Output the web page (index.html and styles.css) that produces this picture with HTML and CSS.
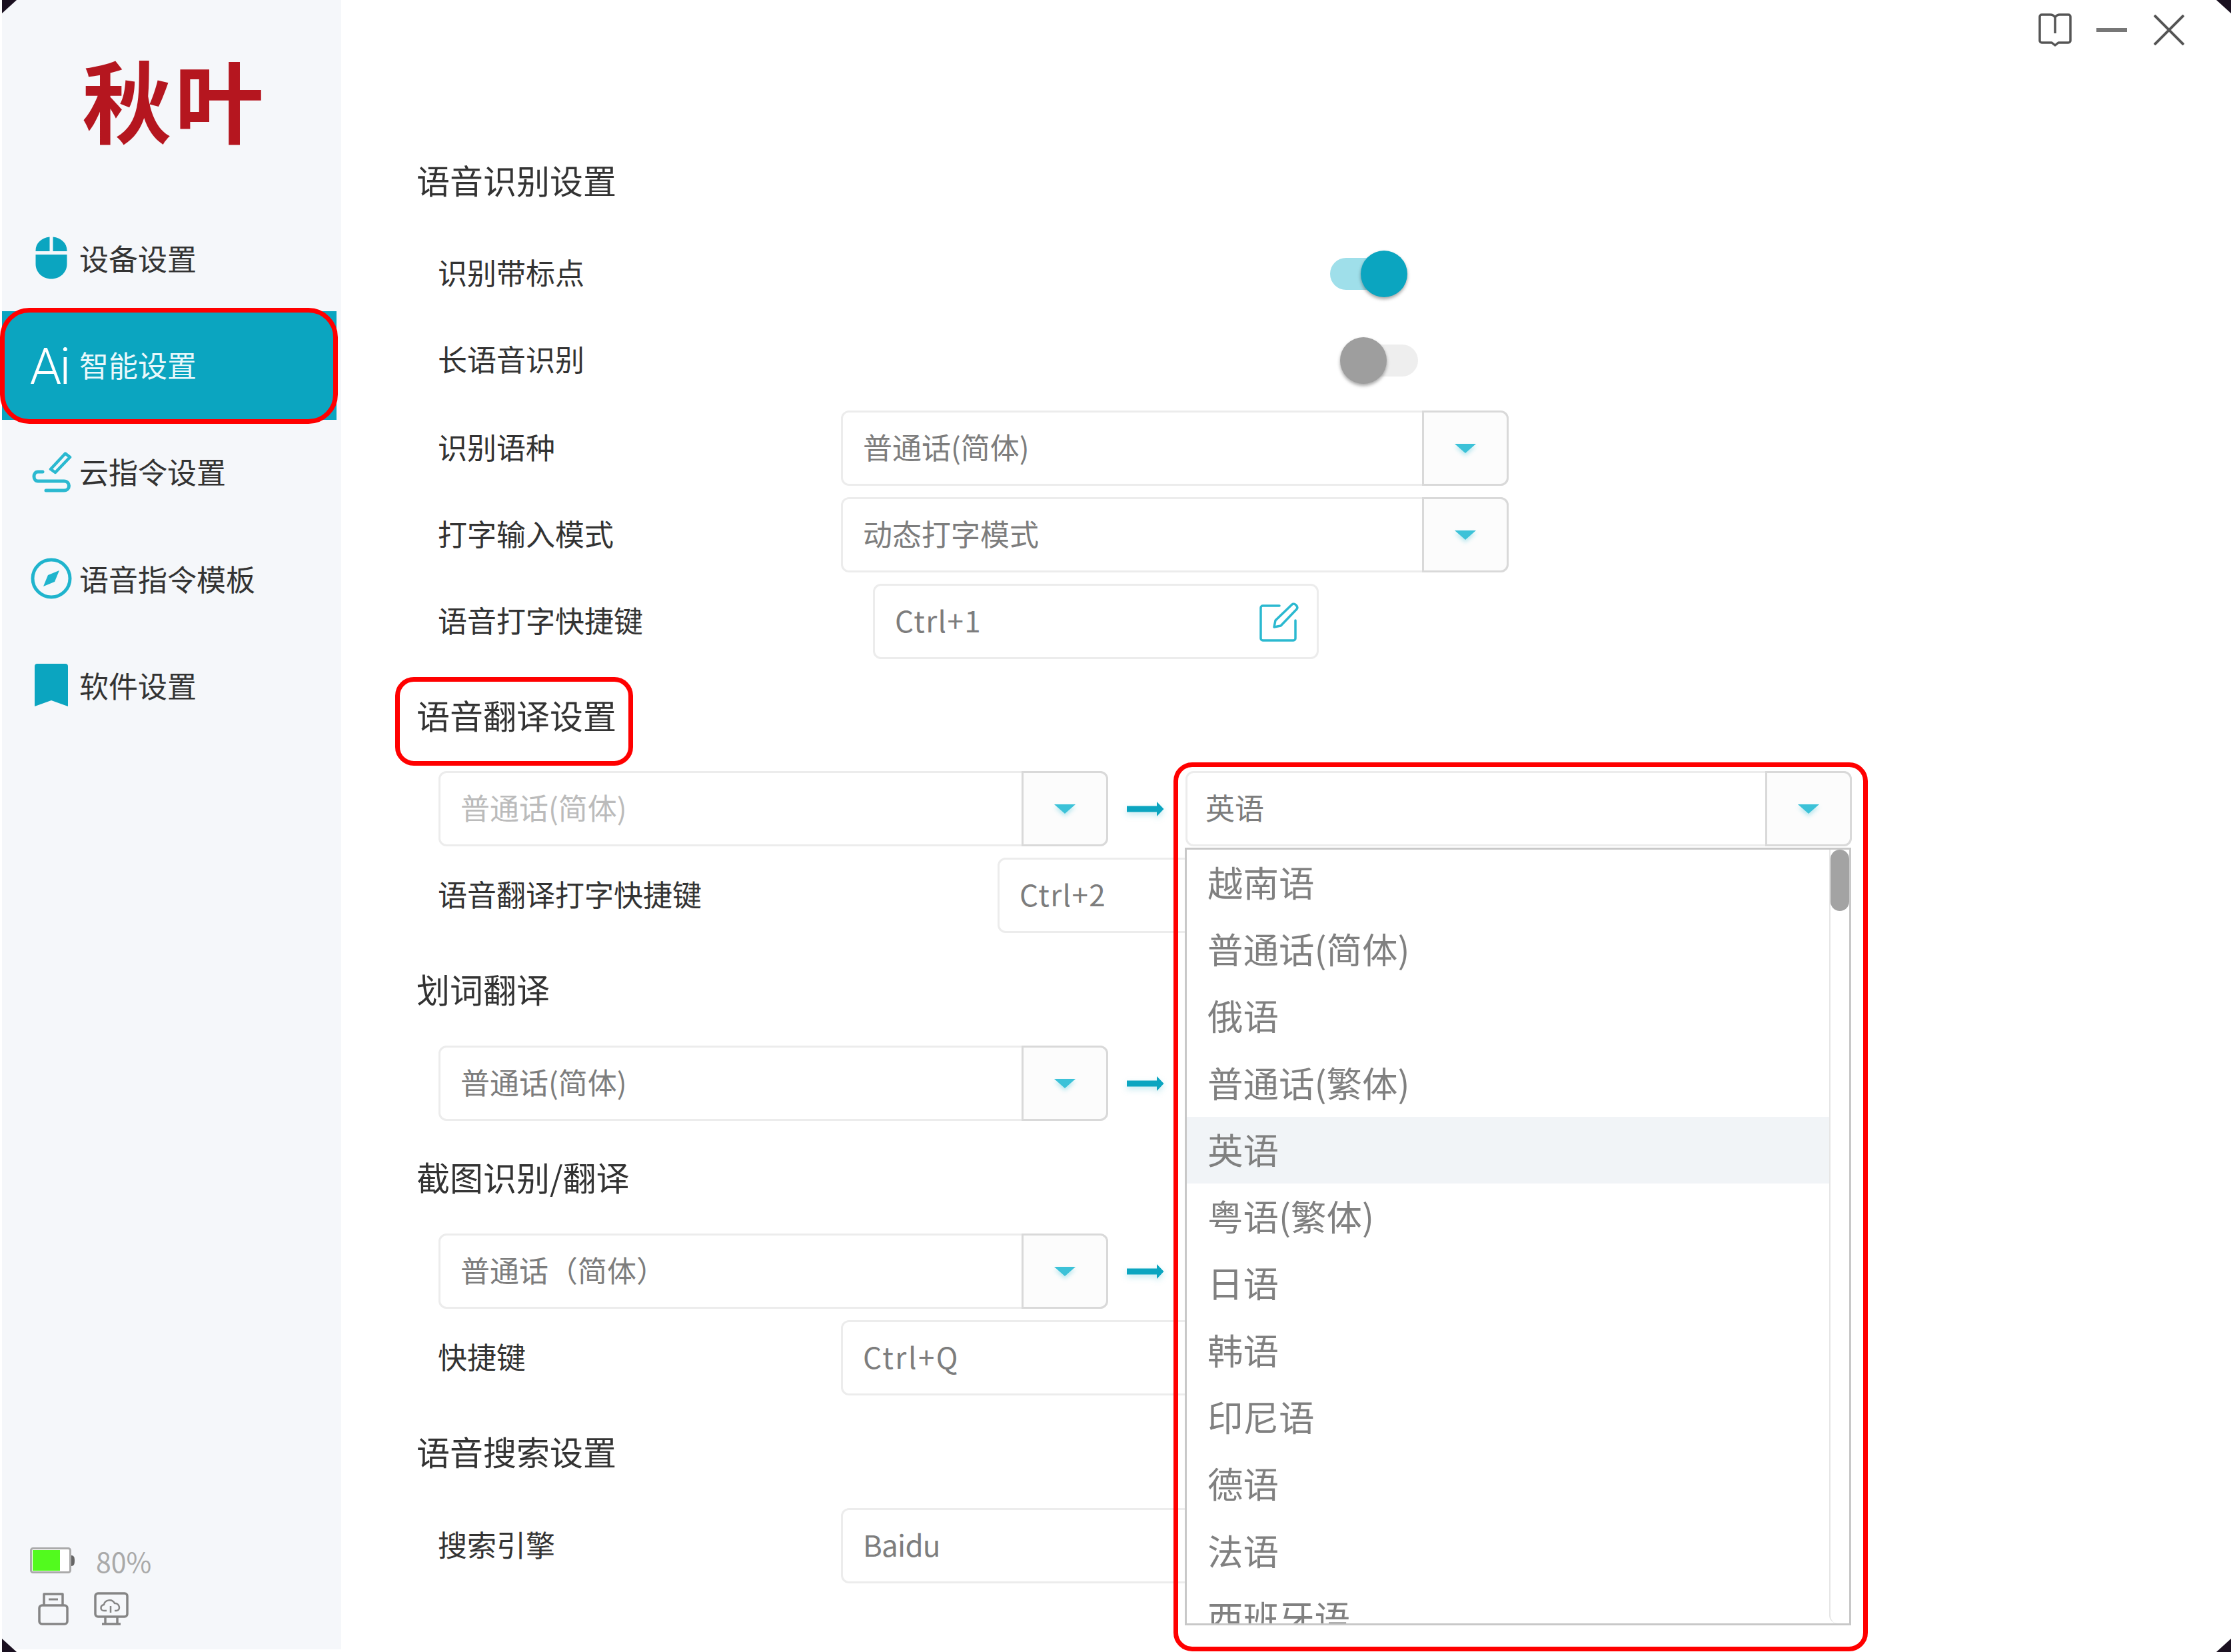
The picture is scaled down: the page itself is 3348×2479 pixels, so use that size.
FILE: index.html
```html
<!DOCTYPE html>
<html lang="zh-CN">
<head>
<meta charset="utf-8">
<title>秋叶</title>
<link rel="stylesheet" href="styles.css">
</head>
<body>
<div class="app">
  <aside class="sidebar">
    <div class="logo">秋叶</div>
    <nav class="nav">
      <div class="nav-item">
        <span class="nav-icon"><svg width="52" height="64" viewBox="0 0 52 64"><path d="M23.5 0.5V22H2.5V21C2.5 10 11 2 23.5 0.5ZM28.5 0.5C41 2 49.5 10 49.5 21V22H28.5ZM2.5 27H49.5V41C49.5 54 39 63.5 26 63.5S2.500 54 2.500 41Z" fill="#0ba5c0"/></svg></span>
        <span>设备设置</span>
      </div>
      <div class="nav-item nav-active">
        <span class="nav-icon nav-ai">Ai</span>
        <span>智能设置</span>
      </div>
      <div class="nav-item">
        <span class="nav-icon"><svg width="62" height="64" viewBox="0 0 62 64" fill="none" stroke="#2bb9d0" stroke-width="5" stroke-linecap="round" stroke-linejoin="round"><path d="M30 28 52 4.500 59 10 37 33Z" stroke-width="4.500"/><path d="M18 32H11C3 32 3 46 11 46H50C60 46 60 60 50 60H23"/></svg></span>
        <span>云指令设置</span>
      </div>
      <div class="nav-item">
        <span class="nav-icon"><svg width="62" height="64" viewBox="0 0 62 64"><circle cx="31" cy="32" r="28" fill="none" stroke="#1fb4cd" stroke-width="5"/><path d="M43 20 36 37 19 44 26 27Z" fill="#1fb4cd"/></svg></span>
        <span>语音指令模板</span>
      </div>
      <div class="nav-item">
        <span class="nav-icon"><svg width="50" height="64" viewBox="0 0 50 64"><path d="M4 0H46A4 4 0 0 1 50 4V64L25 55 0 64V4A4 4 0 0 1 4 0Z" fill="#0ba5c0"/></svg></span>
        <span>软件设置</span>
      </div>
    </nav>
    <div class="status">
      <div class="status-battery">
        <svg width="68" height="40" viewBox="0 0 68 40"><rect x="1.500" y="1.500" width="59" height="36" rx="3" fill="#fff" stroke="#aaa" stroke-width="3"/><rect x="4" y="4" width="41" height="31" fill="#52fa1e"/><path d="M62 12C66 12 67 15 67 20S66 28 62 28Z" fill="#666"/></svg>
        <span class="status-text">80%</span>
      </div>
      <div class="status-icons">
        <svg width="46" height="50" viewBox="0 0 46 50" fill="none" stroke="#858585" stroke-width="3.500" stroke-linejoin="round"><path d="M9 20V3H37V20"/><path d="M16 11H30" stroke-width="3"/><rect x="2" y="20" width="42" height="28" rx="4"/></svg>
        <svg width="54" height="52" viewBox="0 0 52 52" fill="none" stroke="#858585" stroke-width="3.500" stroke-linejoin="round"><rect x="2" y="3" width="48" height="35" rx="4"/><path d="M17 38V48M35 38V48M12 49H40"/><path d="M19 29H15C9 29 9 21 15 20 16 13 27 10 31 18 38 17 41 28 34 29H31M25 22V32" stroke-width="2.500"/></svg>
      </div>
    </div>
  </aside>

  <main class="main">
    <section class="section section-first">
      <h2 class="title">语音识别设置</h2>
      <div class="row">
        <span class="label">识别带标点</span>
        <span class="switch switch-on"><span class="knob"></span></span>
      </div>
      <div class="row">
        <span class="label">长语音识别</span>
        <span class="switch switch-off"><span class="knob"></span></span>
      </div>
      <div class="row row-first-select">
        <span class="label">识别语种</span>
        <div class="select"><span class="select-text">普通话(简体)</span><span class="select-btn"><i class="caret"></i></span></div>
      </div>
      <div class="row">
        <span class="label">打字输入模式</span>
        <div class="select"><span class="select-text">动态打字模式</span><span class="select-btn"><i class="caret"></i></span></div>
      </div>
      <div class="row">
        <span class="label">语音打字快捷键</span>
        <div class="input input-edit">
          <span class="keys">Ctrl+1</span>
          <svg width="60" height="60" viewBox="0 0 60 60" fill="none" stroke="#2bb9d0" stroke-width="3.500" stroke-linecap="round" stroke-linejoin="round"><path d="M30 6H5A3 3 0 0 0 2 9V55A3 3 0 0 0 5 58H51A3 3 0 0 0 54 55V28"/><path d="M22 38 24 28 49 4C52 1 59 7 56 11L32 36Z"/></svg>
        </div>
      </div>
    </section>

    <section class="section">
      <h2 class="title">语音翻译设置</h2>
      <div class="row">
        <div class="select select-trans select-muted"><span class="select-text">普通话(简体)</span><span class="select-btn"><i class="caret"></i></span></div>
        <svg class="arrow" width="56" height="30" viewBox="0 0 56 30"><path d="M0 10.500H45V4L55.500 15 45 26V19.500H0Z" fill="#0ba5c0"/></svg>
        <div class="select select-target"><span class="select-text">英语</span><span class="select-btn"><i class="caret"></i></span></div>
      </div>
      <div class="row">
        <span class="label label-wide">语音翻译打字快捷键</span>
        <div class="input input-wide"><span class="keys">Ctrl+2</span></div>
      </div>
    </section>

    <section class="section">
      <h2 class="title">划词翻译</h2>
      <div class="row">
        <div class="select select-trans"><span class="select-text">普通话(简体)</span><span class="select-btn"><i class="caret"></i></span></div>
        <svg class="arrow" width="56" height="30" viewBox="0 0 56 30"><path d="M0 10.500H45V4L55.500 15 45 26V19.500H0Z" fill="#0ba5c0"/></svg>
      </div>
    </section>

    <section class="section">
      <h2 class="title">截图识别/翻译</h2>
      <div class="row">
        <div class="select select-trans"><span class="select-text">普通话（简体）</span><span class="select-btn"><i class="caret"></i></span></div>
        <svg class="arrow" width="56" height="30" viewBox="0 0 56 30"><path d="M0 10.500H45V4L55.500 15 45 26V19.500H0Z" fill="#0ba5c0"/></svg>
      </div>
      <div class="row">
        <span class="label">快捷键</span>
        <div class="input input-long"><span class="keys keys-q">Ctrl+Q</span></div>
      </div>
    </section>

    <section class="section">
      <h2 class="title">语音搜索设置</h2>
      <div class="row">
        <span class="label">搜索引擎</span>
        <div class="input input-long"><span class="word">Baidu</span></div>
      </div>
    </section>
  </main>

  <div class="window-controls">
    <svg width="50" height="50" viewBox="0 0 50 50" fill="none" stroke="#555" stroke-width="3.500" stroke-linejoin="round"><path d="M25 6C23 3 20 2 18 2H5A3 3 0 0 0 2 5V41A3 3 0 0 0 5 44H20L25 48 30 44H45A3 3 0 0 0 48 41V5A3 3 0 0 0 45 2H32C30 2 27 3 25 6V30"/></svg>
    <svg width="46" height="46" viewBox="0 0 46 46"><rect x="0" y="20" width="46" height="6" fill="#777"/></svg>
    <svg class="window-close" width="46" height="46" viewBox="0 0 46 46" fill="none" stroke="#555" stroke-width="4"><path d="M1 1 45 45M45 1 1 45"/></svg>
  </div>

  <div class="menu">
    <ul class="menu-list">
      <li>越南语</li>
      <li>普通话(简体)</li>
      <li>俄语</li>
      <li>普通话(繁体)</li>
      <li class="menu-current">英语</li>
      <li>粤语(繁体)</li>
      <li>日语</li>
      <li>韩语</li>
      <li>印尼语</li>
      <li>德语</li>
      <li>法语</li>
      <li>西班牙语</li>
    </ul>
    <div class="scroll"><div class="scroll-thumb"></div></div>
  </div>

  <div class="mark mark-nav"></div>
  <div class="mark mark-title"></div>
  <div class="mark mark-menu"></div>

  <i class="corner corner-tl"></i>
  <i class="corner corner-tr"></i>
  <i class="corner corner-bl"></i>
  <i class="corner corner-br"></i>
</div>
</body>
</html>
```

FILE: styles.css
```css
* { box-sizing: border-box; }
html, body { margin: 0; padding: 0; background: #fff; }
body { font-family: "Noto Sans CJK SC", "Noto Sans", sans-serif; color: #333; }

.app {
  position: relative;
  display: flex;
  width: 3348px;
  height: 2479px;
  padding-left: 3px;
  overflow: hidden;
  background: #fff;
}

/* sidebar */
.sidebar {
  display: flex;
  flex-direction: column;
  flex: none;
  width: 509px;
  height: 2475px;
  background: #f5f7fa;
}
.logo {
  height: 307px;
  padding: 47px 0 0 8px;
  text-align: center;
  font-size: 134px;
  font-weight: 700;
  letter-spacing: 4px;
  line-height: 200px;
  color: #b5161f;
}
.nav { display: flex; flex-direction: column; }
.nav-item {
  display: flex;
  align-items: center;
  width: 502px;
  height: 160.300px;
  padding-left: 42px;
  font-size: 44px;
  color: #333;
}
.nav-item > span:last-child { padding-bottom: 1px; }
.nav-icon {
  display: flex;
  justify-content: center;
  align-items: center;
  width: 64px;
  margin-right: 10px;
}
.nav-active { background: #0ba5c0; color: #e9f8fb; box-shadow: 0 2px 0 #0ba5c0; }
.nav-ai {
  padding-top: 6px;
  font-family: Roboto, sans-serif;
  font-size: 76px;
  font-weight: 300;
  letter-spacing: -3px;
  color: #fff;
  transform: translateX(-3px);
}
.status { margin-top: auto; padding: 0 0 35px 42px; }
.status-battery { display: flex; align-items: center; gap: 31px; }
.status-text { font-size: 41px; color: #a9a9a9; }
.status-icons { display: flex; align-items: center; gap: 37px; margin-top: 16px; padding-left: 12px; }

/* main */
.main {
  flex: 1;
  padding: 216px 0 0 113px;
}
.section { margin-bottom: 30px; }
.section-first { margin-bottom: 30px; }
.title {
  display: flex;
  align-items: center;
  height: 113px;
  margin: 0 0 25px;
  padding-bottom: 8px;
  font-size: 50px;
  font-weight: 400;
  color: #333;
}
.section:nth-child(n+3) .title { margin-bottom: 26px; }
.row {
  display: flex;
  align-items: center;
  height: 113px;
  margin: 0 0 17px 33px;
}
.row:last-child { margin-bottom: 0; }
.row-first-select { margin-top: 19px; }
.label {
  flex: none;
  width: 604px;
  padding-bottom: 6px;
  font-size: 44px;
  color: #333;
  transform: translateX(-1px);
}
.label-wide { width: 839px; }

/* switch */
.switch { position: relative; display: block; height: 48px; border-radius: 24px; }
.knob {
  position: absolute;
  top: -11px;
  width: 70px;
  height: 70px;
  border-radius: 50%;
  box-shadow: 0 3px 5px rgba(0, 0, 0, .35);
}
.switch-on { width: 104px; margin-left: 734px; background: #9fdfea; }
.switch-on .knob { left: 46px; background: #0ba5c0; }
.switch-off { width: 103px; margin-left: 763px; background: #eee; }
.switch-off .knob { left: -14px; background: #9e9e9e; }

/* select */
.select {
  display: flex;
  flex: none;
  width: 1002px;
  height: 113px;
  border: 3px solid #ececec;
  border-radius: 12px;
  font-size: 44px;
  color: #7d7d7d;
  background: #fff;
}
.select-text { display: flex; flex: 1; align-items: center; padding: 0 0 6px 30px; }
.select-btn {
  display: flex;
  flex: none;
  justify-content: center;
  align-items: center;
  width: 130px;
  margin: -3px -3px -3px 0;
  border: 3px solid #d9d9d9;
  border-radius: 0 12px 12px 0;
  background: #fcfcfc;
}
.caret {
  display: block;
  width: 0;
  height: 0;
  border-left: 16px solid transparent;
  border-right: 16px solid transparent;
  border-top: 14px solid #3cc2d8;
  filter: drop-shadow(0 4px 3px rgba(60, 194, 216, .35));
}
.select-trans { width: 1005px; }
.select-muted { color: #bbb; }
.select-target { width: 1000px; margin-left: 32px; }
.select-target .select-text { padding-left: 27px; }
.arrow { flex: none; margin-left: 28px; filter: drop-shadow(0 4px 5px rgba(11, 165, 192, .25)); }

/* inputs */
.input {
  display: flex;
  flex: none;
  justify-content: space-between;
  align-items: center;
  height: 113px;
  padding: 0 26px 0 30px;
  border: 3px solid #ececec;
  border-radius: 12px;
  font-size: 44px;
  color: #7d7d7d;
  background: #fff;
}
.input > span { padding-bottom: 5px; }
.keys { letter-spacing: 1.400px; }
.keys-q { letter-spacing: 2.500px; }
.word { letter-spacing: -.8px; }
.input-edit { width: 669px; margin-left: 48px; }
.input-wide { width: 600px; }
.input-long { width: 800px; }

/* window controls */
.window-controls {
  position: absolute;
  top: 20px;
  right: 70px;
  display: flex;
  align-items: center;
  gap: 37px;
}
.window-close { margin-left: 3px; }

/* dropdown menu */
.menu {
  position: absolute;
  left: 1778px;
  top: 1272px;
  display: flex;
  width: 1000px;
  height: 1167px;
  border: 3px solid #c8c8c8;
  background: #fff;
  overflow: hidden;
}
.menu-list { flex: 1; margin: 0; padding: 0; list-style: none; overflow: hidden; }
.menu-list li {
  display: flex;
  align-items: center;
  height: 100.300px;
  padding: 0 0 6px 31px;
  font-size: 53.500px;
  font-weight: 400;
  color: #808080;
  white-space: nowrap;
}
.menu-list .menu-current { background: #f1f4f7; }
.scroll {
  position: relative;
  flex: none;
  width: 30px;
  border-left: 2px solid #e6e6e6;
  border-radius: 0 0 12px 12px;
}
.scroll-thumb {
  width: 28px;
  height: 92px;
  border-radius: 14px;
  background: #a3a3a3;
}

/* red annotations */
.mark { position: absolute; border: 7px solid #f00; pointer-events: none; }
.mark-nav { left: 0; top: 462px; width: 507px; height: 174px; border-radius: 44px; }
.mark-title { left: 593px; top: 1016px; width: 357px; height: 133px; border-radius: 28px; }
.mark-menu { left: 1761px; top: 1144px; width: 1042px; height: 1334px; border-radius: 28px; }

/* window corners */
.corner { position: absolute; width: 22px; height: 20px; background: #1a1020; }
.corner-tl { left: 3px; top: 0; clip-path: polygon(0 0, 100% 0, 0 100%); }
.corner-tr { right: 0; top: 0; clip-path: polygon(0 0, 100% 0, 100% 100%); }
.corner-bl { left: 3px; bottom: 0; clip-path: polygon(0 0, 100% 100%, 0 100%); }
.corner-br { right: 0; bottom: 0; clip-path: polygon(100% 0, 100% 100%, 0 100%); }
```
